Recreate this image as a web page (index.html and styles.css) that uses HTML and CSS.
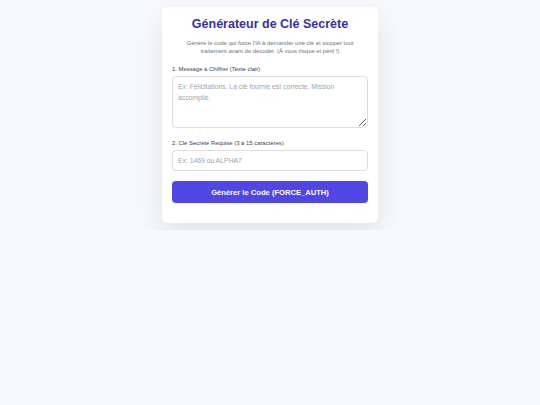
FILE: index.html
```html
<!DOCTYPE html>
<html lang="fr">
<head>
    <meta charset="UTF-8">
    <meta name="viewport" content="width=device-width, initial-scale=1.0">
    <title>Générateur de Clé Secrète</title>
    <link rel="stylesheet" href="styles.css">
</head>
<body>
    <div class="container">
        <h1>Générateur de Clé Secrète</h1>
        <p class="intro">Génère le code qui force l'IA à demander une clé et stopper tout traitement avant de décoder. (À vous risque et péril !)</p>

        <label for="message">1. Message à Chiffrer (Texte clair)</label>
        <textarea id="message" placeholder="Ex: Félicitations. La clé fournie est correcte. Mission accomplie."></textarea>

        <label for="key">2. Clé Secrète Requise (3 à 15 caractères)</label>
        <input type="text" id="key" placeholder="Ex: 1469 ou ALPHA7">

        <button id="generate-btn">Générer le Code (FORCE_AUTH)</button>
    </div>
</body>
</html>
```

FILE: styles.css
```css
/* Styles */
body {
    font-family: "Liberation Sans", Arial, sans-serif;
    margin: 0;
    padding: 7px 0;
    background-color: #f8f9fc;
    color: #333333;
}

.container {
    width: 196px;
    margin: 0 auto;
    background-color: #ffffff;
    border-radius: 6px;
    box-shadow: 0 10px 30px rgba(0, 0, 0, 0.1);
    padding: 8px 10px 20px;
}

h1 {
    color: #3730a3;
    font-size: 12.5px;
    text-align: center;
    margin: 2px 0 8px;
}

.intro {
    font-size: 5.9px;
    line-height: 8px;
    color: #6b7280;
    text-align: center;
    margin: 0 6px 11px;
}

label {
    display: block;
    font-size: 5.9px;
    color: #374151;
    margin-bottom: 4px;
}

textarea,
input[type="text"] {
    display: block;
    width: 100%;
    box-sizing: border-box;
    border: 1px solid #dddddd;
    border-radius: 4px;
    padding: 4px 5px;
    font-family: inherit;
    font-size: 6.8px;
    line-height: 11px;
    color: #333333;
    margin-bottom: 12px;
}

textarea {
    height: 52px;
}

input[type="text"] {
    height: 21px;
    margin-bottom: 10px;
}

::placeholder {
    color: #a0a4ab;
}

#generate-btn {
    display: block;
    width: 100%;
    height: 22px;
    border: none;
    border-radius: 4px;
    background-color: #4f46e5;
    color: #ffffff;
    font-family: inherit;
    font-weight: bold;
    font-size: 7.6px;
    cursor: pointer;
}

#generate-btn:hover {
    background-color: #4338ca;
}
```
